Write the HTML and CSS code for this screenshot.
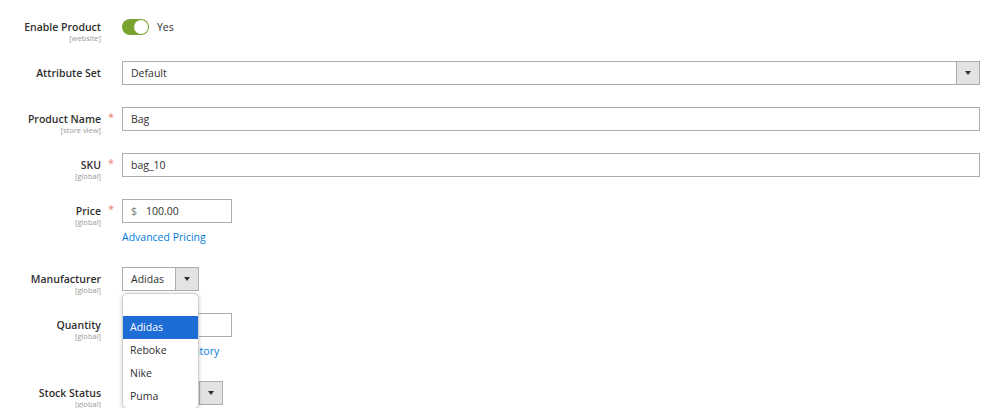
FILE: index.html
```html
<!DOCTYPE html>
<html>
<head>
    <title>New Product</title>
    <link rel="stylesheet" href="styles.css">
</head>
<body>
    <div class="form">
        <div class="row">
            <div class="label">
                <span class="name">Enable Product</span>
                <span class="scope">[website]</span>
            </div>
            <div class="req"></div>
            <div class="control">
                <div class="toggle-line">
                    <span class="toggle"><span class="knob"></span></span>
                    <span class="toggle-text">Yes</span>
                </div>
            </div>
        </div>

        <div class="row">
            <div class="label">
                <span class="name">Attribute Set</span>
            </div>
            <div class="req"></div>
            <div class="control">
                <div class="select wide">
                    <span class="select-value">Default</span>
                    <span class="select-btn"><span class="arrow"></span></span>
                </div>
            </div>
        </div>

        <div class="row">
            <div class="label">
                <span class="name">Product Name</span>
                <span class="scope">[store view]</span>
            </div>
            <div class="req">*</div>
            <div class="control">
                <div class="input wide">Bag</div>
            </div>
        </div>

        <div class="row">
            <div class="label">
                <span class="name">SKU</span>
                <span class="scope">[global]</span>
            </div>
            <div class="req">*</div>
            <div class="control">
                <div class="input wide">bag_10</div>
            </div>
        </div>

        <div class="row">
            <div class="label">
                <span class="name">Price</span>
                <span class="scope">[global]</span>
            </div>
            <div class="req">*</div>
            <div class="control">
                <div class="input short"><span class="currency">$</span>100.00</div>
                <a class="action-link" href="#">Advanced Pricing</a>
            </div>
        </div>

        <div class="row">
            <div class="label">
                <span class="name">Manufacturer</span>
                <span class="scope">[global]</span>
            </div>
            <div class="req"></div>
            <div class="control">
                <div class="select small">
                    <span class="select-value">Adidas</span>
                    <span class="select-btn"><span class="arrow"></span></span>
                </div>
                <ul class="dropdown">
                    <li class="option empty"></li>
                    <li class="option selected">Adidas</li>
                    <li class="option">Reboke</li>
                    <li class="option">Nike</li>
                    <li class="option">Puma</li>
                </ul>
            </div>
        </div>

        <div class="row">
            <div class="label">
                <span class="name">Quantity</span>
                <span class="scope">[global]</span>
            </div>
            <div class="req"></div>
            <div class="control">
                <div class="input short">100</div>
                <a class="action-link" href="#">Advanced Inventory</a>
            </div>
        </div>

        <div class="row">
            <div class="label">
                <span class="name">Stock Status</span>
                <span class="scope">[global]</span>
            </div>
            <div class="req"></div>
            <div class="control">
                <div class="select medium">
                    <span class="select-value">In Stock</span>
                    <span class="select-btn"><span class="arrow"></span></span>
                </div>
            </div>
        </div>
    </div>
</body>
</html>
```

FILE: styles.css
```css
body {
    margin: 0;
    background-color: #fff;
    color: #303030;
    font-family: "Open Sans", Arial, sans-serif;
    font-size: 10.5px;
    overflow: hidden;
}
.form {
    padding: 15px 20px 0 0;
}
.row {
    display: flex;
    align-items: flex-start;
    margin-bottom: 22px;
}
.label {
    width: 101px;
    height: 24px;
    flex-shrink: 0;
    display: flex;
    flex-direction: column;
    align-items: flex-end;
    padding-top: 5px;
    box-sizing: border-box;
}
.name {
    font-weight: 600;
    line-height: 14px;
}
.scope {
    font-size: 7.5px;
    line-height: 9px;
    color: #999;
}
.req {
    width: 21px;
    flex-shrink: 0;
    color: #e8776f;
    font-size: 11px;
    line-height: 19px;
    padding-left: 7px;
    box-sizing: border-box;
}
.control {
    flex: 1;
    position: relative;
}
.toggle-line {
    display: flex;
    align-items: center;
    height: 24px;
}
.toggle {
    width: 27px;
    height: 16px;
    border-radius: 8px;
    background-color: #79a22e;
    position: relative;
    display: inline-block;
}
.knob {
    position: absolute;
    right: 1px;
    top: 1px;
    width: 14px;
    height: 14px;
    border-radius: 50%;
    background: #fff;
}
.toggle-text {
    margin-left: 8px;
}
.input, .select {
    height: 24px;
    box-sizing: border-box;
    border: 1px solid #adadad;
    background: #fff;
    line-height: 22px;
}
.input {
    padding-left: 8px;
}
.wide {
    width: 858px;
}
.short {
    width: 110px;
}
.small {
    width: 77px;
}
.medium {
    width: 101px;
}
.currency {
    color: #777;
    margin-right: 9px;
}
.select {
    display: flex;
}
.select-value {
    flex: 1;
    padding-left: 8px;
}
.select-btn {
    width: 22px;
    background: #e3e3e3;
    border-left: 1px solid #adadad;
    display: flex;
    align-items: center;
    justify-content: center;
}
.arrow {
    width: 0;
    height: 0;
    border-left: 3px solid transparent;
    border-right: 3px solid transparent;
    border-top: 4px solid #303030;
}
.action-link {
    display: block;
    margin-top: 7px;
    color: #007bdb;
    text-decoration: none;
    line-height: 15px;
}
.dropdown {
    position: absolute;
    top: 26px;
    left: 0;
    width: 77px;
    margin: 0;
    padding: 0;
    list-style: none;
    background: #fff;
    border: 1px solid #cfcfcf;
    border-radius: 5px;
    box-shadow: 0 1px 4px rgba(0, 0, 0, 0.2);
    overflow: hidden;
    box-sizing: border-box;
    z-index: 5;
}
.option {
    height: 23px;
    line-height: 23px;
    padding-left: 7px;
}
.option.empty {
    height: 22px;
}
.option.selected {
    background-color: #1e6cd6;
    color: #fff;
}
```
